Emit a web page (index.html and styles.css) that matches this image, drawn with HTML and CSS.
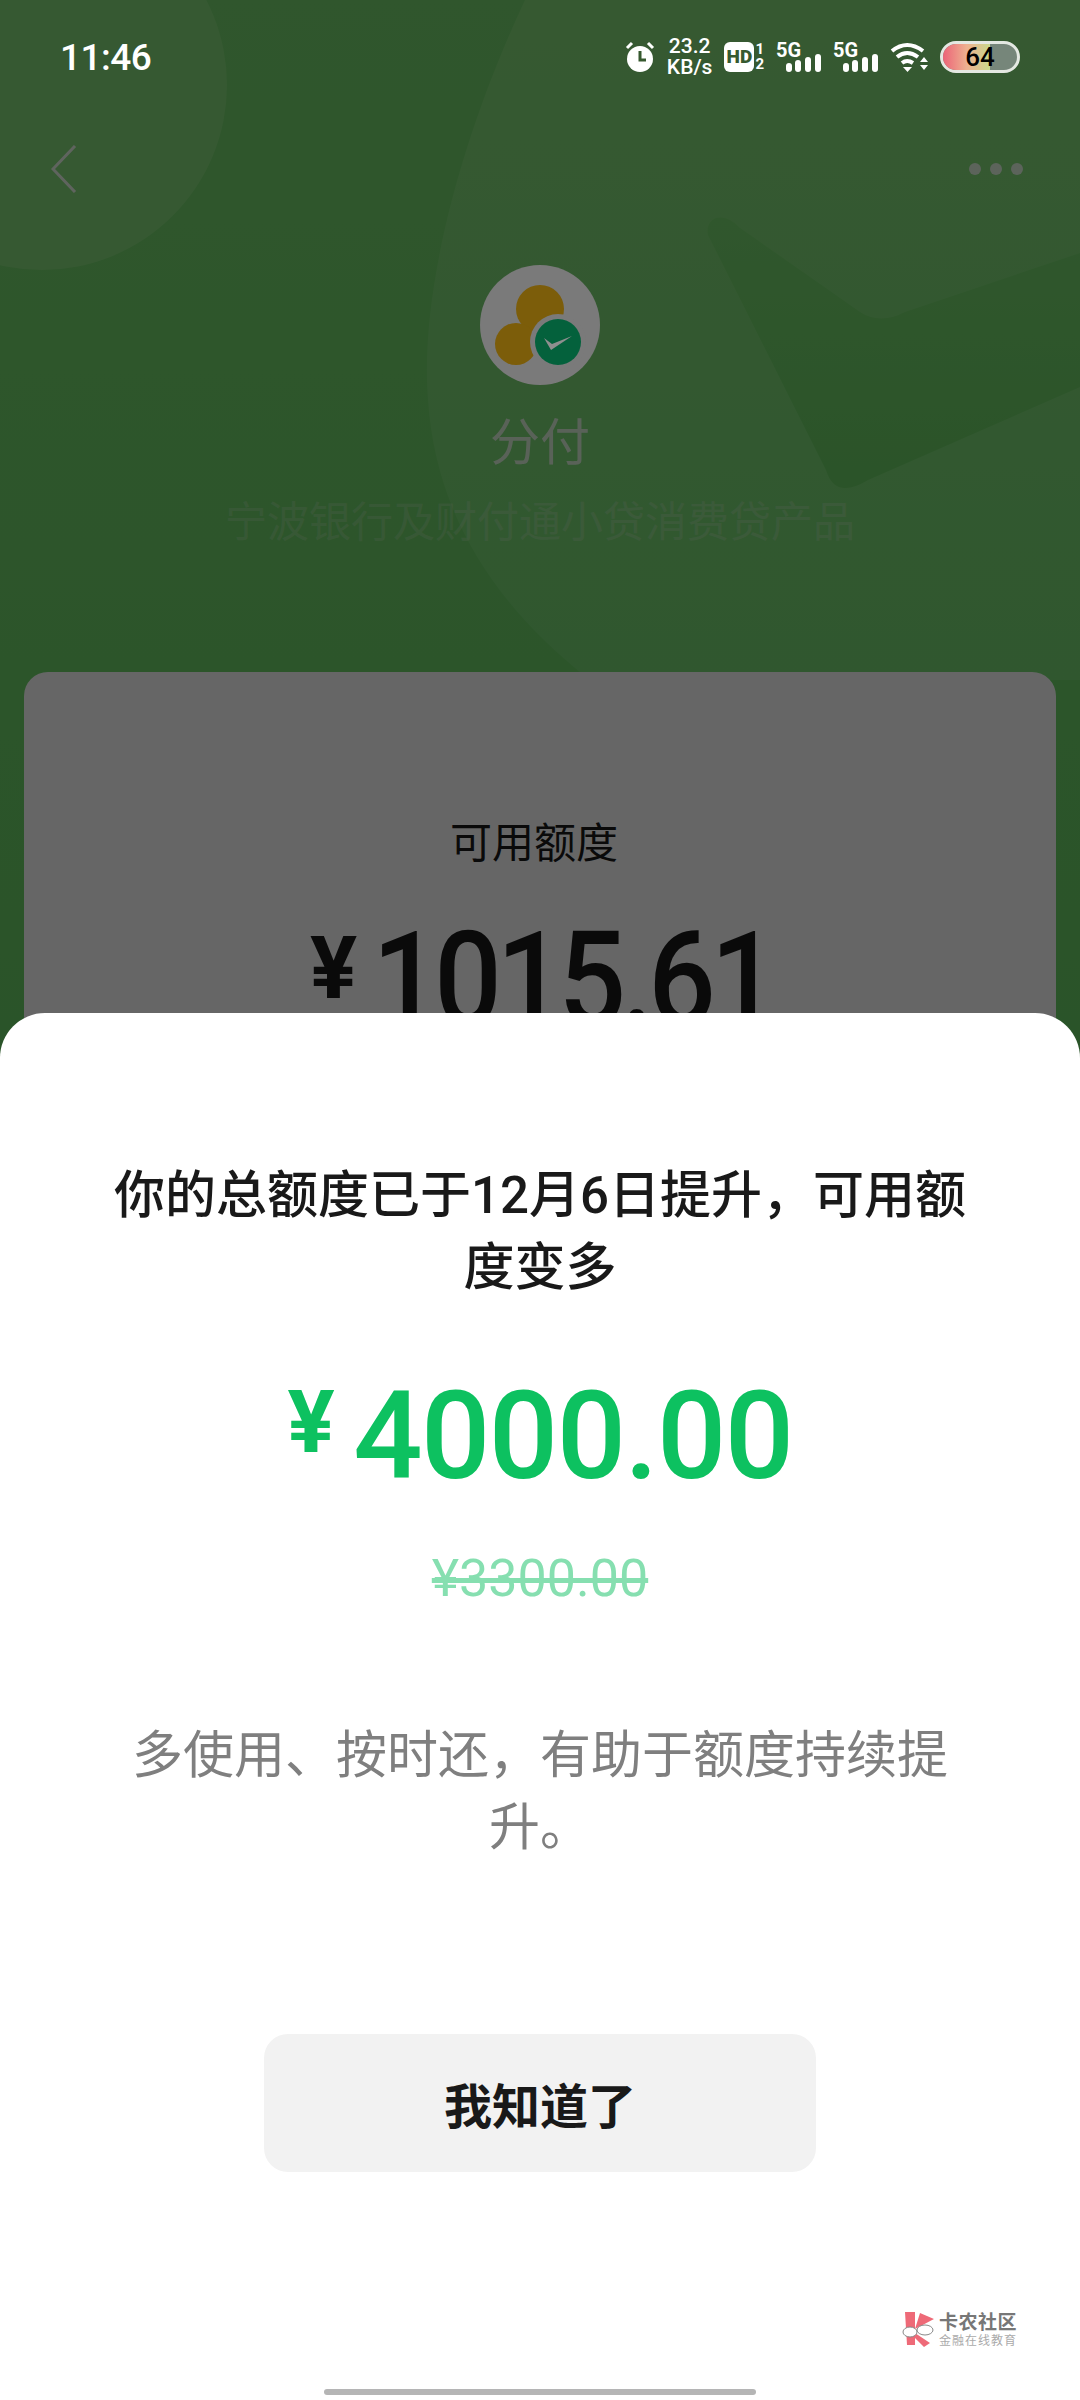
FILE: index.html
```html
<!DOCTYPE html>
<html lang="zh-CN">
<head>
    <meta charset="UTF-8">
    <meta name="viewport" content="width=device-width, initial-scale=1.0">
    <title>分付</title>
    <link rel="stylesheet" href="styles.css">
</head>
<body>
    <div class="phone">
        <!-- page behind the dialog -->
        <main class="page">
            <svg class="page-shapes" width="1080" height="1100" viewBox="0 0 1080 1100">
                <defs>
                    <linearGradient id="blobFill" x1="0" y1="0" x2="0" y2="1">
                        <stop offset="0" stop-color="#88df7c" />
                        <stop offset="1" stop-color="#78da76" />
                    </linearGradient>
                    <linearGradient id="arrowFill" x1="0" y1="0" x2="0" y2="1">
                        <stop offset="0" stop-color="#79d971" />
                        <stop offset="1" stop-color="#6cd266" />
                    </linearGradient>
                </defs>
                <circle cx="42" cy="85" r="185" fill="#88df7e" />
                <path d="M525 0 C455 150 420 300 428 400 C436 520 500 610 590 680 L1080 680 L1080 0 Z" fill="url(#blobFill)" />
                <path d="M716 218 Q728 215 740 228 L860 312 Q880 325 905 312 L1080 253 L1080 387 L868 480 Q835 500 826 470 L708 235 Q706 222 716 218 Z" fill="url(#arrowFill)" />
            </svg>
            <nav class="page-nav">
                <svg class="back-icon" width="26" height="48" viewBox="0 0 26 48">
                    <path d="M24 1 L2 24 L24 47" fill="none" stroke="#ffffff" stroke-width="3" />
                </svg>
                <div class="more-dots"><span></span><span></span><span></span></div>
            </nav>
            <section class="product">
                <!-- sits above the scrim, colours are the dimmed ones -->
                <svg class="product-logo" width="120" height="120" viewBox="0 0 120 120">
                    <circle cx="60" cy="60" r="60" fill="#7a7a7a" />
                    <circle cx="60" cy="44" r="24" fill="#7c5d0a" />
                    <circle cx="36" cy="79" r="21" fill="#7c5d0a" />
                    <circle cx="78" cy="77" r="28" fill="#7a7a7a" />
                    <circle cx="78" cy="77" r="23" fill="#04613c" />
                    <path d="M64 73 L71 85 L92 71 L72 79 Z" fill="#8f8f8f" />
                </svg>
                <h1 class="product-name">分付</h1>
                <p class="product-desc">宁波银行及财付通小贷消费贷产品</p>
            </section>
            <section class="quota-card">
                <div class="quota-label">可用额度</div>
                <div class="quota-amount"><span class="quota-yen">¥</span><span class="quota-num">1015.61</span></div>
            </section>
        </main>
        <div class="scrim"></div>

        <header class="status-bar">
            <span class="status-time">11:46</span>
            <div class="status-icons">
                <svg width="30" height="32" viewBox="0 0 30 32">
                    <circle cx="15" cy="18" r="13" fill="#fff" />
                    <path d="M15 10 V19 H21" fill="none" stroke="#36592f" stroke-width="3" />
                    <path d="M2 7 L7 2 M28 7 L23 2" stroke="#fff" stroke-width="3" />
                </svg>
                <div class="net-speed"><span>23.2</span><span>KB/s</span></div>
                <div class="hd-group">
                    <span class="hd-badge">HD</span>
                    <div class="sim-nums"><span>1</span><span>2</span></div>
                </div>
                <div class="signal"><span class="signal-label">5G</span>
                    <svg width="35" height="18" viewBox="0 0 35 18">
                        <rect x="0" y="9" width="6" height="9" rx="3" fill="#fff" /><rect x="9" y="6" width="6" height="12" rx="3" fill="#fff" /><rect x="19" y="3" width="6" height="15" rx="3" fill="#fff" /><rect x="29" y="0" width="6" height="18" rx="3" fill="#fff" />
                    </svg>
                </div>
                <div class="signal"><span class="signal-label">5G</span>
                    <svg width="35" height="18" viewBox="0 0 35 18">
                        <rect x="0" y="9" width="6" height="9" rx="3" fill="#fff" /><rect x="9" y="6" width="6" height="12" rx="3" fill="#fff" /><rect x="19" y="3" width="6" height="15" rx="3" fill="#fff" /><rect x="29" y="0" width="6" height="18" rx="3" fill="#fff" />
                    </svg>
                </div>
                <svg width="38" height="30" viewBox="0 0 38 30">
                    <path d="M2 9 Q17 -3 33 9" fill="none" stroke="#fff" stroke-width="4" />
                    <path d="M7 15 Q17 7 28 15" fill="none" stroke="#fff" stroke-width="4" />
                    <path d="M12 21 Q17 17 23 21" fill="none" stroke="#fff" stroke-width="4" />
                    <path d="M13 25 H22 L17.5 30 Z" fill="#fff" />
                    <path d="M34 15 L38 20 H30 Z M30 23 H38 L34 28 Z" fill="#fff" />
                </svg>
                <div class="battery"><div class="battery-fill"></div><span class="battery-num">64</span></div>
            </div>
        </header>

        <!-- bottom sheet -->
        <section class="sheet">
            <h2 class="sheet-title">你的总额度已于12月6日提升，可用额度变多</h2>
            <div class="sheet-amount"><span class="sheet-yen">¥</span><span>4000.00</span></div>
            <div class="sheet-old">¥3300.00</div>
            <p class="sheet-tip">多使用、按时还，有助于额度持续提升。</p>
            <button class="sheet-btn">我知道了</button>
        </section>

        <div class="watermark">
            <svg width="32" height="36" viewBox="0 0 32 36">
                <path d="M3 0 H13 V33 H5 Z M18 1 L32 7 L13 17 Z M13 21 L28 31 L22 35 L13 26 Z" fill="#ee6a78" />
                <ellipse cx="8" cy="20" rx="7" ry="5" fill="#fff" stroke="#888" stroke-width="1" />
                <ellipse cx="23" cy="18" rx="8" ry="5" fill="#fff" stroke="#888" stroke-width="1" />
            </svg>
            <div class="watermark-text">
                <span class="watermark-name">卡农社区</span>
                <span class="watermark-sub">金融在线教育</span>
            </div>
        </div>
        <div class="home-bar"></div>
    </div>
</body>
</html>
```

FILE: styles.css
```css
* {
    box-sizing: border-box;
}
body {
    margin: 0;
    background-color: #ffffff;
    font-family: Roboto, "Noto Sans CJK SC", sans-serif;
}
h1, h2, p {
    margin: 0;
    font-weight: 400;
}
.phone {
    position: relative;
    width: 1080px;
    height: 2400px;
    overflow: hidden;
}
.page {
    position: relative;
    height: 1100px;
    padding-top: 145px;
    background: linear-gradient(180deg, #78d870 0%, #69d266 100%);
    overflow: hidden;
}
.page-shapes {
    position: absolute;
    top: 0;
    left: 0;
}
.page-nav {
    position: relative;
    display: flex;
    justify-content: space-between;
    align-items: center;
    padding: 0 57px 0 51px;
}
.back-icon {
    display: block;
    opacity: 0.85;
}
.more-dots {
    display: flex;
    gap: 9px;
}
.more-dots span {
    width: 12px;
    height: 12px;
    border-radius: 50%;
    background-color: #ffffff;
    opacity: 0.8;
}
.product {
    position: relative;
    display: flex;
    flex-direction: column;
    align-items: center;
    margin-top: 72px;
}
.product-logo {
    position: relative;
    z-index: 1;
    display: block;
}
.product-name {
    margin-top: 28px;
    font-size: 50px;
    line-height: 60px;
    color: rgba(255, 255, 255, 0.75);
}
.product-desc {
    margin-top: 25px;
    font-size: 42px;
    line-height: 50px;
    color: rgba(255, 255, 255, 0.2);
}
.quota-card {
    position: relative;
    margin: 124px 24px 0;
    height: 500px;
    padding-top: 147px;
    border-radius: 24px;
    background-color: #ffffff;
    text-align: center;
}
.quota-label {
    padding-right: 12px;
    font-size: 42px;
    line-height: 50px;
    color: #191919;
}
.quota-amount {
    display: flex;
    justify-content: center;
    margin-top: 46px;
    padding-left: 25px;
    font-size: 132px;
    line-height: 130px;
    font-weight: 500;
    color: #191919;
}
.quota-num {
    display: inline-block;
    letter-spacing: -6px;
    transform: scaleX(0.9);
}
.quota-yen {
    margin-right: -7px;
    font-size: 88px;
    line-height: 106px;
    font-weight: 700;
}
.scrim {
    position: absolute;
    top: 0;
    left: 0;
    width: 100%;
    height: 100%;
    background-color: rgba(0, 0, 0, 0.6);
}
.status-bar {
    position: absolute;
    top: 0;
    left: 0;
    width: 100%;
    height: 114px;
    display: flex;
    justify-content: space-between;
    align-items: center;
    padding: 0 60px 0 60px;
    color: #ffffff;
}
.status-time {
    font-size: 37px;
    font-weight: 500;
    letter-spacing: -0.5px;
}
.status-icons {
    display: flex;
    align-items: center;
    gap: 12px;
}
.net-speed {
    display: flex;
    flex-direction: column;
    align-items: center;
    font-size: 21px;
    line-height: 21px;
    font-weight: 500;
}
.hd-group {
    display: flex;
    align-items: center;
    gap: 1px;
}
.hd-badge {
    width: 30px;
    height: 30px;
    border-radius: 6px;
    background-color: #ffffff;
    color: #36592f;
    font-size: 19px;
    line-height: 30px;
    font-weight: 900;
    text-align: center;
}
.sim-nums {
    display: flex;
    flex-direction: column;
    font-size: 15px;
    line-height: 15px;
    font-weight: 700;
}
.signal {
    position: relative;
    width: 45px;
    height: 30px;
    display: flex;
    justify-content: flex-end;
    align-items: flex-end;
}
.signal-label {
    position: absolute;
    top: -2px;
    left: 0;
    font-size: 20px;
    line-height: 20px;
    font-weight: 700;
}
.battery {
    position: relative;
    width: 80px;
    height: 32px;
    border: 3px solid #e4e8e2;
    border-radius: 16px;
    background-color: #76867a;
    overflow: hidden;
    text-align: center;
}
.battery-fill {
    position: absolute;
    top: 0;
    left: 0;
    width: 64%;
    height: 100%;
    background: linear-gradient(90deg, #ec6478 0%, #eeb090 50%, #c8d98c 100%);
}
.battery-num {
    position: relative;
    font-size: 26px;
    line-height: 26px;
    font-weight: 500;
    color: #000000;
    display: block;
}
.sheet {
    position: absolute;
    top: 1013px;
    left: 0;
    width: 100%;
    height: 1387px;
    display: flex;
    flex-direction: column;
    align-items: center;
    padding-top: 147px;
    border-radius: 45px 45px 0 0;
    background-color: #ffffff;
    text-align: center;
}
.sheet-title {
    width: 880px;
    font-size: 51px;
    line-height: 72px;
    font-weight: 500;
    color: #191919;
}
.sheet-amount {
    display: flex;
    justify-content: center;
    margin-top: 68px;
    font-size: 122px;
    line-height: 130px;
    font-weight: 500;
    letter-spacing: -1.5px;
    color: #0dc160;
}
.sheet-yen {
    margin-right: 20px;
    font-size: 88px;
    line-height: 100px;
    font-weight: 700;
}
.sheet-old {
    margin-top: 46px;
    font-size: 52px;
    line-height: 62px;
    color: #86dfb0;
    text-decoration: line-through;
    text-decoration-thickness: 5px;
}
.sheet-tip {
    width: 840px;
    margin-top: 110px;
    font-size: 51px;
    line-height: 72px;
    color: #7f7f7f;
}
.sheet-btn {
    width: 552px;
    height: 138px;
    margin-top: 170px;
    border: none;
    border-radius: 24px;
    background-color: #f2f2f2;
    font-family: inherit;
    font-size: 48px;
    font-weight: 700;
    color: #191919;
}
.watermark {
    position: absolute;
    top: 2312px;
    left: 902px;
    display: flex;
    align-items: center;
    gap: 5px;
}
.watermark-text {
    display: flex;
    flex-direction: column;
}
.watermark-name {
    font-size: 19px;
    line-height: 22px;
    font-weight: 700;
    letter-spacing: 0.5px;
    color: #777777;
}
.watermark-sub {
    font-size: 12px;
    line-height: 14px;
    letter-spacing: 1px;
    color: #aaaaaa;
}
.home-bar {
    position: absolute;
    top: 2389px;
    left: 324px;
    width: 432px;
    height: 6px;
    border-radius: 3px;
    background-color: #b5b5b5;
}
```
